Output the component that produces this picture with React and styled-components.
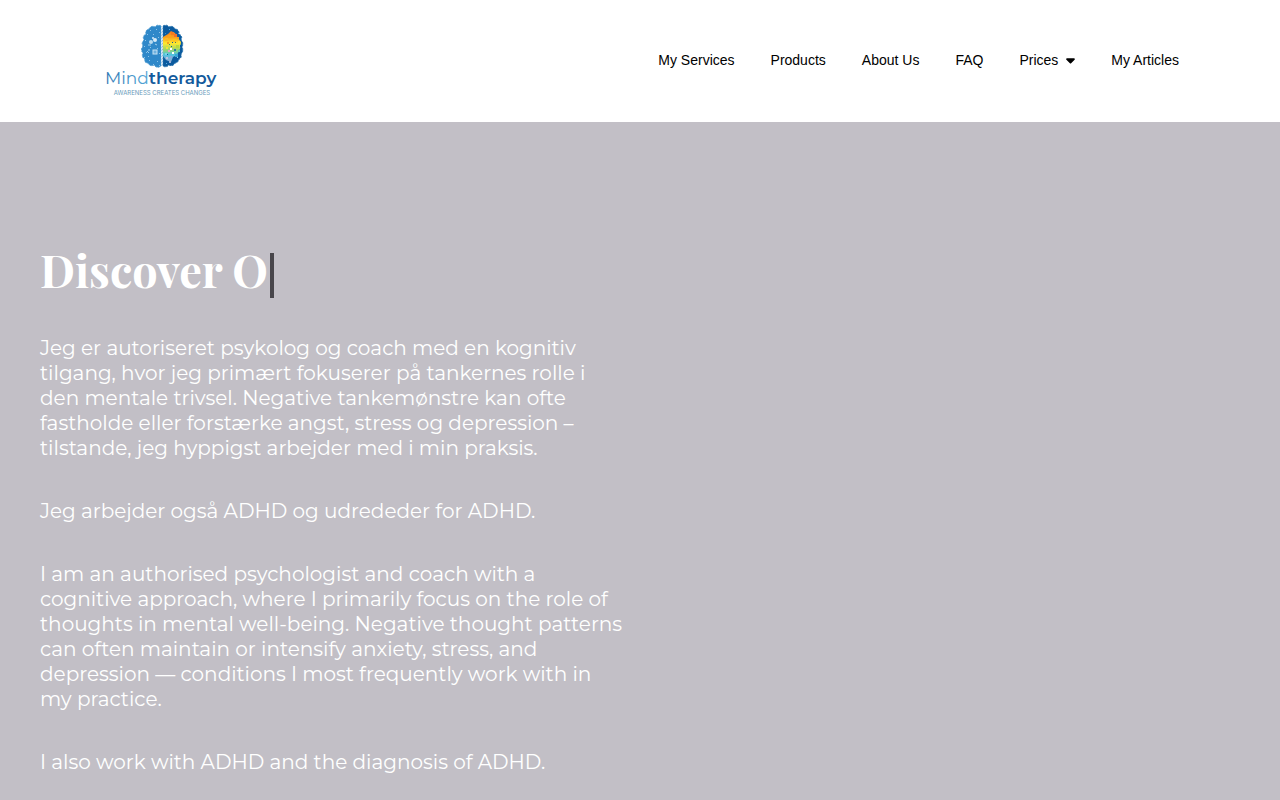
import React from 'react';
import styled, { createGlobalStyle } from 'styled-components';
import { FaCaretDown } from 'react-icons/fa6';

const GlobalStyle = createGlobalStyle`
* {
    box-sizing: border-box;
}
body {
    margin: 0;
    background-color: #c2bfc6;
    font-family: "Liberation Sans", Arial, sans-serif;
}
`;

const Header = styled.header`
    display: flex;
    align-items: center;
    justify-content: space-between;
    height: 122px;
    padding: 0 83px 2px 102px;
    background-color: #fff;
`;

const LogoLink = styled.a`
    display: block;
    line-height: 0;
`;

const Menu = styled.nav`
    display: flex;
`;

const MenuLink = styled.a`
    display: flex;
    align-items: center;
    gap: 8px;
    padding: 12px 18px;
    color: #000;
    font-size: 14px;
    line-height: 20px;
    text-decoration: none;
    svg {
        width: 9px;
        height: 14px;
    }
`;

const Hero = styled.main`
    padding: 118px 40px 25px;
`;

const Column = styled.div`
    width: 50%;
    padding-right: 16px;
`;

const Title = styled.h1`
    display: flex;
    align-items: flex-end;
    gap: 2px;
    margin: 0 0 38px;
    color: #fff;
    font-family: "Playfair Display", "Liberation Serif", serif;
    font-size: 45px;
    font-weight: 700;
    line-height: 58px;
`;

const Cursor = styled.span`
    width: 4px;
    height: 45px;
    background-color: #48464b;
`;

const Text = styled.p`
    margin: 0 0 38px;
    color: #fff;
    font-family: Montserrat, Inter, sans-serif;
    font-size: 20px;
    line-height: 25px;
`;

const links = [
    { label: 'My Services' },
    { label: 'Products' },
    { label: 'About Us' },
    { label: 'FAQ' },
    { label: 'Prices', caret: true },
    { label: 'My Articles' },
];

const paragraphs = [
    'Jeg er autoriseret psykolog og coach med en kognitiv tilgang, hvor jeg primært fokuserer på tankernes rolle i den mentale trivsel. Negative tankemønstre kan ofte fastholde eller forstærke angst, stress og depression – tilstande, jeg hyppigst arbejder med i min praksis.',
    'Jeg arbejder også ADHD og udrededer for ADHD.',
    'I am an authorised psychologist and coach with a cognitive approach, where I primarily focus on the role of thoughts in mental well-being. Negative thought patterns can often maintain or intensify anxiety, stress, and depression — conditions I most frequently work with in my practice.',
    'I also work with ADHD and the diagnosis of ADHD.',
];

// x, y, size, colour of the small tiles in the right half of the brain
const tiles = [
    [66, 8, 3, '#f47b20'], [69, 10, 3, '#f2702a'], [63, 11, 3, '#f9a11b'], [72, 13, 2, '#f9a11b'],
    [60, 14, 3, '#fbb829'], [68, 15, 3, '#fdc51c'], [73, 17, 2, '#ffe135'], [62, 18, 2, '#f7a41e'],
    [71, 21, 3, '#b9d93a'], [61, 23, 2, '#f7e532'], [66, 22, 1, '#0b5a9e'], [75, 21, 2, '#0b5a9e'],
    [69, 25, 2, '#2878b0'], [73, 26, 2, '#5ac6bd'], [65, 24, 2, '#fff'], [63, 26, 2, '#e9a3c6'],
    [67, 28, 2, '#fff'], [60, 29, 2, '#7dd1e8'], [70, 30, 3, '#39a6d8'], [65, 32, 2, '#8ba7d8'],
    [61, 33, 2, '#bac3e2'], [68, 34, 2, '#0b5a9e'], [72, 33, 1, '#8ad1ef'], [64, 37, 2, '#9bb0d6'],
    [60, 9, 1, '#2f8fd0'], [64, 5, 1, '#58a9dd'], [73, 9, 1, '#58a9dd'], [61, 39, 1, '#58a9dd'],
    [67, 18, 1, '#0b5a9e'], [64, 20, 1, '#477f70'], [70, 18, 1, '#477f70'], [62, 30, 1, '#0b5a9e'],
];

const specks = [
    [45, 6], [51, 5], [54, 8], [42, 10], [48, 10], [40, 16], [53, 13], [39, 22], [45, 23],
    [52, 24], [41, 28], [54, 29], [39, 33], [44, 36], [52, 37], [48, 40], [54, 41], [43, 32],
];

const Logo = () => (
    <svg width="120" height="74" viewBox="-3 -1 120 74" role="img" aria-label="Mindtherapy">
        <defs>
            <linearGradient id="heat" x1="0" y1="0" x2="0" y2="1">
                <stop offset="0" stopColor="#f47b20" />
                <stop offset="0.2" stopColor="#f9a11b" />
                <stop offset="0.4" stopColor="#ffe82e" />
                <stop offset="0.6" stopColor="#9cd66b" />
                <stop offset="0.76" stopColor="#4cc3df" />
                <stop offset="1" stopColor="#9aa9d5" />
            </linearGradient>
            <linearGradient id="mind" x1="0" y1="0" x2="1" y2="0">
                <stop offset="0" stopColor="#2f78b5" />
                <stop offset="0.4" stopColor="#55a8d8" />
            </linearGradient>
        </defs>
        <path
            d="M56 2 Q52 0 50 3 Q46 1 44 5 Q40 6 41 10 Q37 12 39 16 Q36 19 38 22 Q35 26 38 29 Q36 33 40 35 Q39 39 43 39 Q45 43 49 41 Q52 45 56 42Z"
            fill="#2f88c9"
            stroke="#4b9bd2"
            strokeDasharray="2 1"
        />
        <path
            d="M58 2 Q62 0 64 3 Q68 1 70 5 Q74 5 74 10 Q78 12 76 16 Q79 19 77 23 Q79 27 76 30 Q77 34 74 35 Q73 39 70 39 Q68 43 64 41 Q61 44 58 42Z"
            fill="#0b5a9e"
            stroke="#2472ae"
            strokeDasharray="2 1"
        />
        <path d="M58 13 L63 10 L66 7 L70 9 L73 14 L76 18 L75 25 L72 31 L68 33 L66 38 L61 36 L58 32Z" fill="url(#heat)" />
        {tiles.map(([x, y, size, fill]) => (
            <rect key={`${x}-${y}`} x={x} y={y} width={size} height={size} fill={fill} />
        ))}
        {specks.map(([x, y]) => (
            <rect key={`${x}-${y}`} x={x} y={y} width="1" height="1" fill="#8cc3e8" />
        ))}
        <circle cx="46" cy="18" r="2" fill="#b7daf0" />
        <circle cx="50" cy="16" r="2" fill="#d6eaf7" />
        <circle cx="48" cy="14" r="1" fill="#d6eaf7" />
        <path d="M43 21h3M50 20l2 1" stroke="#a3cfec" />
        <rect x="48" y="26" width="4" height="4" fill="#6fb1df" stroke="#c5e1f3" />
        <path d="M42 27l2 2M44 25v2" stroke="#9fcdeb" />
        <text x="0" y="60" fontFamily="Montserrat, Inter, sans-serif" fontSize="17">
            <tspan fill="url(#mind)" fontWeight="400">Mind</tspan>
            <tspan fill="#135a9c" fontWeight="600">therapy</tspan>
        </text>
        <text x="57" y="71" textAnchor="middle" fill="#6a9cba" fontFamily="Inter, sans-serif" fontSize="6">
            AWARENESS CREATES CHANGES
        </text>
    </svg>
);

class App extends React.Component {
    render() {
        return (
            <>
                <GlobalStyle />
                <Header>
                    <LogoLink href="#"><Logo /></LogoLink>
                    <Menu>
                        {links.map(({ label, caret }) => (
                            <MenuLink key={label} href="#">
                                {label}
                                {caret ? <FaCaretDown aria-hidden="true" /> : null}
                            </MenuLink>
                        ))}
                    </Menu>
                </Header>
                <Hero>
                    <Column>
                        <Title>Discover O<Cursor /></Title>
                        {paragraphs.map((text) => <Text key={text}>{text}</Text>)}
                    </Column>
                </Hero>
            </>
        )
    }
}

export default App;
